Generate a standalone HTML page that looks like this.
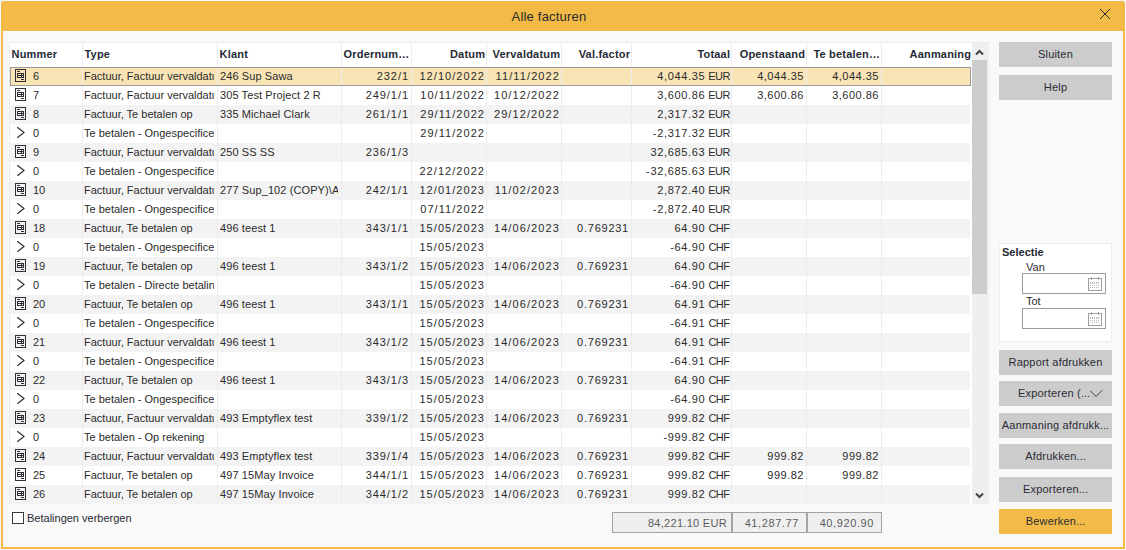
<!DOCTYPE html>
<html><head><meta charset="utf-8"><style>
*{box-sizing:border-box;margin:0;padding:0}
html,body{width:1126px;height:550px;overflow:hidden;background:#f4f6f9;font-family:"Liberation Sans",sans-serif;color:#2b2b2b}
.win{position:absolute;left:1px;top:1px;width:1124px;height:548px;background:#f9f9f9;border:2px solid #f2bb48;border-top:0;border-radius:3px 3px 0 0}
.title{position:absolute;left:-2px;top:0;width:1124px;height:30px;background:#f2bb48;border-radius:3px 3px 0 0}
.title .t{position:absolute;left:0;width:1096px;top:0;height:30px;line-height:31px;text-align:center;font-size:13px;color:#2a2a2a;letter-spacing:0.2px}
.a{position:absolute}
.tbl{position:absolute;left:9px;top:42px;width:980px;height:462px;background:#fff;border:1px solid #ebebeb;border-bottom:0;border-right:0;overflow:hidden}
.hdr{position:absolute;left:0;top:0;width:979px;height:24px;background:#fff}
.hdr .c{line-height:23px;height:24px;font-weight:bold;font-size:11px;color:#262a36}
.hdr .c{letter-spacing:.2px} .hdr .L{padding-left:1.5px} .hdr .R{padding-right:.8px}
.row{position:absolute;left:0;width:961px;height:19px}
.row.g{background:#f3f3f3;width:960px}
.row.sel{background:#f9e4b6}
.selb{position:absolute;left:0;top:24px;width:961px;height:19px;border:1px solid #9a9a9a}
.c{position:absolute;top:0;height:19px;line-height:19px;font-size:11px;white-space:nowrap;overflow:hidden}
.L{text-align:left;padding-left:2px}
.R{text-align:right;padding-right:2px}
.ic{position:absolute;left:5px;top:2px}
.sep{position:absolute;top:0;width:1px;height:462px;background:#ececec}
.sb{position:absolute;left:962px;top:0;width:17px;height:462px;background:#efefef}
.thumb{position:absolute;left:0;top:17px;width:15px;height:234px;background:#cdcdcd}
.btn{position:absolute;left:998px;width:113px;height:25px;background:#cccccc;font-size:11px;letter-spacing:.2px;line-height:25px;text-align:center;color:#2b2b35}
.btn i{font-style:normal;letter-spacing:0}
.btn.o{background:#f2bb48}
.tot{position:absolute;top:512px;height:21px;background:#efefef;border:1px solid #a3a3a3;font-size:11px;line-height:20px;text-align:right;padding-right:7px;color:#5c5c5c;letter-spacing:.6px}
</style></head><body>
<div class="win">
<div class="title"><div class="t">Alle facturen</div>
<svg class="a" style="left:1098px;top:7px" width="12" height="12" viewBox="0 0 12 12"><path d="M1 1 L11 11 M11 1 L1 11" stroke="#2a2a30" stroke-width="1"/></svg>
</div>

</div>
<div class="tbl">
<div class="hdr">
<div class="c L " style="left:0px;width:72px">Nummer</div>
<div class="c L " style="left:73px;width:134px">Type</div>
<div class="c L " style="left:208px;width:123px">Klant</div>
<div class="c L " style="left:332px;width:69px">Ordernum…</div>
<div class="c R " style="left:402px;width:74px">Datum</div>
<div class="c R " style="left:477px;width:74px">Vervaldatum</div>
<div class="c R " style="left:552px;width:69px">Val.factor</div>
<div class="c R " style="left:622px;width:99px">Totaal</div>
<div class="c R " style="left:722px;width:74px">Openstaand</div>
<div class="c R " style="left:797px;width:74px">Te betalen…</div>
<div class="c R " style="left:872px;width:90px">Aanmaning</div>
</div>
<div class="row sel" style="top:24px">
<svg class="ic" width="11" height="13" viewBox="0 0 11 13"><g fill="#2f2f35"><rect x="0" y="0" width="11" height="1"/><rect x="0" y="12" width="11" height="1"/><rect x="0" y="0" width="1" height="13"/><rect x="10" y="0" width="1" height="13"/><rect x="2" y="2" width="3" height="1"/><rect x="2" y="4" width="7" height="1"/><rect x="2" y="6" width="7" height="1"/><rect x="2" y="8" width="7" height="1"/><rect x="2" y="4" width="1" height="5"/><rect x="6" y="4" width="1" height="5"/><rect x="8" y="4" width="1" height="5"/><rect x="6" y="10" width="3" height="1"/></g></svg>
<div class="c L" style="left:21px;width:50px">6</div>
<div class="c L " style="left:73px;width:131px;padding-left:1px">Factuur, Factuur vervaldatum</div>
<div class="c L " style="left:208px;width:120px;letter-spacing:0.1px">246 Sup Sawa</div>
<div class="c R " style="left:332px;width:69px;letter-spacing:0.95px">232/1</div>
<div class="c R " style="left:402px;width:74px;letter-spacing:1.05px;padding-right:1px">12/10/2022</div>
<div class="c R " style="left:477px;width:74px;letter-spacing:1.1px;padding-right:1px">11/11/2022</div>
<div class="c R " style="left:552px;width:69px;letter-spacing:0.75px"></div>
<div class="c R " style="left:622px;width:99px;padding-right:1px"><span style="letter-spacing:.65px">4,044.35</span> <span style="letter-spacing:-.5px">EUR</span></div>
<div class="c R " style="left:722px;width:74px;letter-spacing:0.5px">4,044.35</div>
<div class="c R " style="left:797px;width:74px;letter-spacing:0.5px">4,044.35</div>
</div>
<div class="row " style="top:43px">
<svg class="ic" width="11" height="13" viewBox="0 0 11 13"><g fill="#2f2f35"><rect x="0" y="0" width="11" height="1"/><rect x="0" y="12" width="11" height="1"/><rect x="0" y="0" width="1" height="13"/><rect x="10" y="0" width="1" height="13"/><rect x="2" y="2" width="3" height="1"/><rect x="2" y="4" width="7" height="1"/><rect x="2" y="6" width="7" height="1"/><rect x="2" y="8" width="7" height="1"/><rect x="2" y="4" width="1" height="5"/><rect x="6" y="4" width="1" height="5"/><rect x="8" y="4" width="1" height="5"/><rect x="6" y="10" width="3" height="1"/></g></svg>
<div class="c L" style="left:21px;width:50px">7</div>
<div class="c L " style="left:73px;width:131px;padding-left:1px">Factuur, Factuur vervaldatum</div>
<div class="c L " style="left:208px;width:120px;letter-spacing:0.1px">305 Test Project 2 R</div>
<div class="c R " style="left:332px;width:69px;letter-spacing:0.95px">249/1/1</div>
<div class="c R " style="left:402px;width:74px;letter-spacing:1.05px;padding-right:1px">10/11/2022</div>
<div class="c R " style="left:477px;width:74px;letter-spacing:1.1px;padding-right:1px">10/12/2022</div>
<div class="c R " style="left:552px;width:69px;letter-spacing:0.75px"></div>
<div class="c R " style="left:622px;width:99px;padding-right:1px"><span style="letter-spacing:.65px">3,600.86</span> <span style="letter-spacing:-.5px">EUR</span></div>
<div class="c R " style="left:722px;width:74px;letter-spacing:0.5px">3,600.86</div>
<div class="c R " style="left:797px;width:74px;letter-spacing:0.5px">3,600.86</div>
</div>
<div class="row g" style="top:62px">
<svg class="ic" width="11" height="13" viewBox="0 0 11 13"><g fill="#2f2f35"><rect x="0" y="0" width="11" height="1"/><rect x="0" y="12" width="11" height="1"/><rect x="0" y="0" width="1" height="13"/><rect x="10" y="0" width="1" height="13"/><rect x="2" y="2" width="3" height="1"/><rect x="2" y="4" width="7" height="1"/><rect x="2" y="6" width="7" height="1"/><rect x="2" y="8" width="7" height="1"/><rect x="2" y="4" width="1" height="5"/><rect x="6" y="4" width="1" height="5"/><rect x="8" y="4" width="1" height="5"/><rect x="6" y="10" width="3" height="1"/></g></svg>
<div class="c L" style="left:21px;width:50px">8</div>
<div class="c L " style="left:73px;width:131px;padding-left:1px">Factuur, Te betalen op</div>
<div class="c L " style="left:208px;width:120px;letter-spacing:0.1px">335 Michael Clark</div>
<div class="c R " style="left:332px;width:69px;letter-spacing:0.95px">261/1/1</div>
<div class="c R " style="left:402px;width:74px;letter-spacing:1.05px;padding-right:1px">29/11/2022</div>
<div class="c R " style="left:477px;width:74px;letter-spacing:1.1px;padding-right:1px">29/12/2022</div>
<div class="c R " style="left:552px;width:69px;letter-spacing:0.75px"></div>
<div class="c R " style="left:622px;width:99px;padding-right:1px"><span style="letter-spacing:.65px">2,317.32</span> <span style="letter-spacing:-.5px">EUR</span></div>
<div class="c R " style="left:722px;width:74px;letter-spacing:0.5px"></div>
<div class="c R " style="left:797px;width:74px;letter-spacing:0.5px"></div>
</div>
<div class="row " style="top:81px">
<svg class="ic" width="11" height="13" viewBox="0 0 11 13" style="top:3px;left:5px"><path d="M2.3 0.2 L9 5.5 L2.3 10.8" fill="none" stroke="#2f2f35" stroke-width="1.2"/></svg>
<div class="c L" style="left:21px;width:50px">0</div>
<div class="c L " style="left:73px;width:131px;padding-left:1px">Te betalen - Ongespecificeerd</div>
<div class="c L " style="left:208px;width:120px;letter-spacing:0.1px"></div>
<div class="c R " style="left:332px;width:69px;letter-spacing:0.95px"></div>
<div class="c R " style="left:402px;width:74px;letter-spacing:1.05px;padding-right:1px">29/11/2022</div>
<div class="c R " style="left:477px;width:74px;letter-spacing:1.1px;padding-right:1px"></div>
<div class="c R " style="left:552px;width:69px;letter-spacing:0.75px"></div>
<div class="c R " style="left:622px;width:99px;padding-right:1px"><span style="letter-spacing:.65px">-2,317.32</span> <span style="letter-spacing:-.5px">EUR</span></div>
<div class="c R " style="left:722px;width:74px;letter-spacing:0.5px"></div>
<div class="c R " style="left:797px;width:74px;letter-spacing:0.5px"></div>
</div>
<div class="row g" style="top:100px">
<svg class="ic" width="11" height="13" viewBox="0 0 11 13"><g fill="#2f2f35"><rect x="0" y="0" width="11" height="1"/><rect x="0" y="12" width="11" height="1"/><rect x="0" y="0" width="1" height="13"/><rect x="10" y="0" width="1" height="13"/><rect x="2" y="2" width="3" height="1"/><rect x="2" y="4" width="7" height="1"/><rect x="2" y="6" width="7" height="1"/><rect x="2" y="8" width="7" height="1"/><rect x="2" y="4" width="1" height="5"/><rect x="6" y="4" width="1" height="5"/><rect x="8" y="4" width="1" height="5"/><rect x="6" y="10" width="3" height="1"/></g></svg>
<div class="c L" style="left:21px;width:50px">9</div>
<div class="c L " style="left:73px;width:131px;padding-left:1px">Factuur, Factuur vervaldatum</div>
<div class="c L " style="left:208px;width:120px;letter-spacing:0.1px">250 SS SS</div>
<div class="c R " style="left:332px;width:69px;letter-spacing:0.95px">236/1/3</div>
<div class="c R " style="left:402px;width:74px;letter-spacing:1.05px;padding-right:1px"></div>
<div class="c R " style="left:477px;width:74px;letter-spacing:1.1px;padding-right:1px"></div>
<div class="c R " style="left:552px;width:69px;letter-spacing:0.75px"></div>
<div class="c R " style="left:622px;width:99px;padding-right:1px"><span style="letter-spacing:.65px">32,685.63</span> <span style="letter-spacing:-.5px">EUR</span></div>
<div class="c R " style="left:722px;width:74px;letter-spacing:0.5px"></div>
<div class="c R " style="left:797px;width:74px;letter-spacing:0.5px"></div>
</div>
<div class="row " style="top:119px">
<svg class="ic" width="11" height="13" viewBox="0 0 11 13" style="top:3px;left:5px"><path d="M2.3 0.2 L9 5.5 L2.3 10.8" fill="none" stroke="#2f2f35" stroke-width="1.2"/></svg>
<div class="c L" style="left:21px;width:50px">0</div>
<div class="c L " style="left:73px;width:131px;padding-left:1px">Te betalen - Ongespecificeerd</div>
<div class="c L " style="left:208px;width:120px;letter-spacing:0.1px"></div>
<div class="c R " style="left:332px;width:69px;letter-spacing:0.95px"></div>
<div class="c R " style="left:402px;width:74px;letter-spacing:1.05px;padding-right:1px">22/12/2022</div>
<div class="c R " style="left:477px;width:74px;letter-spacing:1.1px;padding-right:1px"></div>
<div class="c R " style="left:552px;width:69px;letter-spacing:0.75px"></div>
<div class="c R " style="left:622px;width:99px;padding-right:1px"><span style="letter-spacing:.65px">-32,685.63</span> <span style="letter-spacing:-.5px">EUR</span></div>
<div class="c R " style="left:722px;width:74px;letter-spacing:0.5px"></div>
<div class="c R " style="left:797px;width:74px;letter-spacing:0.5px"></div>
</div>
<div class="row g" style="top:138px">
<svg class="ic" width="11" height="13" viewBox="0 0 11 13"><g fill="#2f2f35"><rect x="0" y="0" width="11" height="1"/><rect x="0" y="12" width="11" height="1"/><rect x="0" y="0" width="1" height="13"/><rect x="10" y="0" width="1" height="13"/><rect x="2" y="2" width="3" height="1"/><rect x="2" y="4" width="7" height="1"/><rect x="2" y="6" width="7" height="1"/><rect x="2" y="8" width="7" height="1"/><rect x="2" y="4" width="1" height="5"/><rect x="6" y="4" width="1" height="5"/><rect x="8" y="4" width="1" height="5"/><rect x="6" y="10" width="3" height="1"/></g></svg>
<div class="c L" style="left:21px;width:50px">10</div>
<div class="c L " style="left:73px;width:131px;padding-left:1px">Factuur, Factuur vervaldatum</div>
<div class="c L " style="left:208px;width:120px;letter-spacing:0.1px">277 Sup_102 (COPY)\Adres</div>
<div class="c R " style="left:332px;width:69px;letter-spacing:0.95px">242/1/1</div>
<div class="c R " style="left:402px;width:74px;letter-spacing:1.05px;padding-right:1px">12/01/2023</div>
<div class="c R " style="left:477px;width:74px;letter-spacing:1.1px;padding-right:1px">11/02/2023</div>
<div class="c R " style="left:552px;width:69px;letter-spacing:0.75px"></div>
<div class="c R " style="left:622px;width:99px;padding-right:1px"><span style="letter-spacing:.65px">2,872.40</span> <span style="letter-spacing:-.5px">EUR</span></div>
<div class="c R " style="left:722px;width:74px;letter-spacing:0.5px"></div>
<div class="c R " style="left:797px;width:74px;letter-spacing:0.5px"></div>
</div>
<div class="row " style="top:157px">
<svg class="ic" width="11" height="13" viewBox="0 0 11 13" style="top:3px;left:5px"><path d="M2.3 0.2 L9 5.5 L2.3 10.8" fill="none" stroke="#2f2f35" stroke-width="1.2"/></svg>
<div class="c L" style="left:21px;width:50px">0</div>
<div class="c L " style="left:73px;width:131px;padding-left:1px">Te betalen - Ongespecificeerd</div>
<div class="c L " style="left:208px;width:120px;letter-spacing:0.1px"></div>
<div class="c R " style="left:332px;width:69px;letter-spacing:0.95px"></div>
<div class="c R " style="left:402px;width:74px;letter-spacing:1.05px;padding-right:1px">07/11/2022</div>
<div class="c R " style="left:477px;width:74px;letter-spacing:1.1px;padding-right:1px"></div>
<div class="c R " style="left:552px;width:69px;letter-spacing:0.75px"></div>
<div class="c R " style="left:622px;width:99px;padding-right:1px"><span style="letter-spacing:.65px">-2,872.40</span> <span style="letter-spacing:-.5px">EUR</span></div>
<div class="c R " style="left:722px;width:74px;letter-spacing:0.5px"></div>
<div class="c R " style="left:797px;width:74px;letter-spacing:0.5px"></div>
</div>
<div class="row g" style="top:176px">
<svg class="ic" width="11" height="13" viewBox="0 0 11 13"><g fill="#2f2f35"><rect x="0" y="0" width="11" height="1"/><rect x="0" y="12" width="11" height="1"/><rect x="0" y="0" width="1" height="13"/><rect x="10" y="0" width="1" height="13"/><rect x="2" y="2" width="3" height="1"/><rect x="2" y="4" width="7" height="1"/><rect x="2" y="6" width="7" height="1"/><rect x="2" y="8" width="7" height="1"/><rect x="2" y="4" width="1" height="5"/><rect x="6" y="4" width="1" height="5"/><rect x="8" y="4" width="1" height="5"/><rect x="6" y="10" width="3" height="1"/></g></svg>
<div class="c L" style="left:21px;width:50px">18</div>
<div class="c L " style="left:73px;width:131px;padding-left:1px">Factuur, Te betalen op</div>
<div class="c L " style="left:208px;width:120px;letter-spacing:0.1px">496 teest 1</div>
<div class="c R " style="left:332px;width:69px;letter-spacing:0.95px">343/1/1</div>
<div class="c R " style="left:402px;width:74px;letter-spacing:1.05px;padding-right:1px">15/05/2023</div>
<div class="c R " style="left:477px;width:74px;letter-spacing:1.1px;padding-right:1px">14/06/2023</div>
<div class="c R " style="left:552px;width:69px;letter-spacing:0.75px">0.769231</div>
<div class="c R " style="left:622px;width:99px;padding-right:1.5px"><span style="letter-spacing:.65px">64.90</span> <span style="letter-spacing:-.5px">CHF</span></div>
<div class="c R " style="left:722px;width:74px;letter-spacing:0.5px"></div>
<div class="c R " style="left:797px;width:74px;letter-spacing:0.5px"></div>
</div>
<div class="row " style="top:195px">
<svg class="ic" width="11" height="13" viewBox="0 0 11 13" style="top:3px;left:5px"><path d="M2.3 0.2 L9 5.5 L2.3 10.8" fill="none" stroke="#2f2f35" stroke-width="1.2"/></svg>
<div class="c L" style="left:21px;width:50px">0</div>
<div class="c L " style="left:73px;width:131px;padding-left:1px">Te betalen - Ongespecificeerd</div>
<div class="c L " style="left:208px;width:120px;letter-spacing:0.1px"></div>
<div class="c R " style="left:332px;width:69px;letter-spacing:0.95px"></div>
<div class="c R " style="left:402px;width:74px;letter-spacing:1.05px;padding-right:1px">15/05/2023</div>
<div class="c R " style="left:477px;width:74px;letter-spacing:1.1px;padding-right:1px"></div>
<div class="c R " style="left:552px;width:69px;letter-spacing:0.75px"></div>
<div class="c R " style="left:622px;width:99px;padding-right:1.5px"><span style="letter-spacing:.65px">-64.90</span> <span style="letter-spacing:-.5px">CHF</span></div>
<div class="c R " style="left:722px;width:74px;letter-spacing:0.5px"></div>
<div class="c R " style="left:797px;width:74px;letter-spacing:0.5px"></div>
</div>
<div class="row g" style="top:214px">
<svg class="ic" width="11" height="13" viewBox="0 0 11 13"><g fill="#2f2f35"><rect x="0" y="0" width="11" height="1"/><rect x="0" y="12" width="11" height="1"/><rect x="0" y="0" width="1" height="13"/><rect x="10" y="0" width="1" height="13"/><rect x="2" y="2" width="3" height="1"/><rect x="2" y="4" width="7" height="1"/><rect x="2" y="6" width="7" height="1"/><rect x="2" y="8" width="7" height="1"/><rect x="2" y="4" width="1" height="5"/><rect x="6" y="4" width="1" height="5"/><rect x="8" y="4" width="1" height="5"/><rect x="6" y="10" width="3" height="1"/></g></svg>
<div class="c L" style="left:21px;width:50px">19</div>
<div class="c L " style="left:73px;width:131px;padding-left:1px">Factuur, Te betalen op</div>
<div class="c L " style="left:208px;width:120px;letter-spacing:0.1px">496 teest 1</div>
<div class="c R " style="left:332px;width:69px;letter-spacing:0.95px">343/1/2</div>
<div class="c R " style="left:402px;width:74px;letter-spacing:1.05px;padding-right:1px">15/05/2023</div>
<div class="c R " style="left:477px;width:74px;letter-spacing:1.1px;padding-right:1px">14/06/2023</div>
<div class="c R " style="left:552px;width:69px;letter-spacing:0.75px">0.769231</div>
<div class="c R " style="left:622px;width:99px;padding-right:1.5px"><span style="letter-spacing:.65px">64.90</span> <span style="letter-spacing:-.5px">CHF</span></div>
<div class="c R " style="left:722px;width:74px;letter-spacing:0.5px"></div>
<div class="c R " style="left:797px;width:74px;letter-spacing:0.5px"></div>
</div>
<div class="row " style="top:233px">
<svg class="ic" width="11" height="13" viewBox="0 0 11 13" style="top:3px;left:5px"><path d="M2.3 0.2 L9 5.5 L2.3 10.8" fill="none" stroke="#2f2f35" stroke-width="1.2"/></svg>
<div class="c L" style="left:21px;width:50px">0</div>
<div class="c L " style="left:73px;width:131px;padding-left:1px">Te betalen - Directe betaling</div>
<div class="c L " style="left:208px;width:120px;letter-spacing:0.1px"></div>
<div class="c R " style="left:332px;width:69px;letter-spacing:0.95px"></div>
<div class="c R " style="left:402px;width:74px;letter-spacing:1.05px;padding-right:1px">15/05/2023</div>
<div class="c R " style="left:477px;width:74px;letter-spacing:1.1px;padding-right:1px"></div>
<div class="c R " style="left:552px;width:69px;letter-spacing:0.75px"></div>
<div class="c R " style="left:622px;width:99px;padding-right:1.5px"><span style="letter-spacing:.65px">-64.90</span> <span style="letter-spacing:-.5px">CHF</span></div>
<div class="c R " style="left:722px;width:74px;letter-spacing:0.5px"></div>
<div class="c R " style="left:797px;width:74px;letter-spacing:0.5px"></div>
</div>
<div class="row g" style="top:252px">
<svg class="ic" width="11" height="13" viewBox="0 0 11 13"><g fill="#2f2f35"><rect x="0" y="0" width="11" height="1"/><rect x="0" y="12" width="11" height="1"/><rect x="0" y="0" width="1" height="13"/><rect x="10" y="0" width="1" height="13"/><rect x="2" y="2" width="3" height="1"/><rect x="2" y="4" width="7" height="1"/><rect x="2" y="6" width="7" height="1"/><rect x="2" y="8" width="7" height="1"/><rect x="2" y="4" width="1" height="5"/><rect x="6" y="4" width="1" height="5"/><rect x="8" y="4" width="1" height="5"/><rect x="6" y="10" width="3" height="1"/></g></svg>
<div class="c L" style="left:21px;width:50px">20</div>
<div class="c L " style="left:73px;width:131px;padding-left:1px">Factuur, Te betalen op</div>
<div class="c L " style="left:208px;width:120px;letter-spacing:0.1px">496 teest 1</div>
<div class="c R " style="left:332px;width:69px;letter-spacing:0.95px">343/1/1</div>
<div class="c R " style="left:402px;width:74px;letter-spacing:1.05px;padding-right:1px">15/05/2023</div>
<div class="c R " style="left:477px;width:74px;letter-spacing:1.1px;padding-right:1px">14/06/2023</div>
<div class="c R " style="left:552px;width:69px;letter-spacing:0.75px">0.769231</div>
<div class="c R " style="left:622px;width:99px;padding-right:1.5px"><span style="letter-spacing:.65px">64.91</span> <span style="letter-spacing:-.5px">CHF</span></div>
<div class="c R " style="left:722px;width:74px;letter-spacing:0.5px"></div>
<div class="c R " style="left:797px;width:74px;letter-spacing:0.5px"></div>
</div>
<div class="row " style="top:271px">
<svg class="ic" width="11" height="13" viewBox="0 0 11 13" style="top:3px;left:5px"><path d="M2.3 0.2 L9 5.5 L2.3 10.8" fill="none" stroke="#2f2f35" stroke-width="1.2"/></svg>
<div class="c L" style="left:21px;width:50px">0</div>
<div class="c L " style="left:73px;width:131px;padding-left:1px">Te betalen - Ongespecificeerd</div>
<div class="c L " style="left:208px;width:120px;letter-spacing:0.1px"></div>
<div class="c R " style="left:332px;width:69px;letter-spacing:0.95px"></div>
<div class="c R " style="left:402px;width:74px;letter-spacing:1.05px;padding-right:1px">15/05/2023</div>
<div class="c R " style="left:477px;width:74px;letter-spacing:1.1px;padding-right:1px"></div>
<div class="c R " style="left:552px;width:69px;letter-spacing:0.75px"></div>
<div class="c R " style="left:622px;width:99px;padding-right:1.5px"><span style="letter-spacing:.65px">-64.91</span> <span style="letter-spacing:-.5px">CHF</span></div>
<div class="c R " style="left:722px;width:74px;letter-spacing:0.5px"></div>
<div class="c R " style="left:797px;width:74px;letter-spacing:0.5px"></div>
</div>
<div class="row g" style="top:290px">
<svg class="ic" width="11" height="13" viewBox="0 0 11 13"><g fill="#2f2f35"><rect x="0" y="0" width="11" height="1"/><rect x="0" y="12" width="11" height="1"/><rect x="0" y="0" width="1" height="13"/><rect x="10" y="0" width="1" height="13"/><rect x="2" y="2" width="3" height="1"/><rect x="2" y="4" width="7" height="1"/><rect x="2" y="6" width="7" height="1"/><rect x="2" y="8" width="7" height="1"/><rect x="2" y="4" width="1" height="5"/><rect x="6" y="4" width="1" height="5"/><rect x="8" y="4" width="1" height="5"/><rect x="6" y="10" width="3" height="1"/></g></svg>
<div class="c L" style="left:21px;width:50px">21</div>
<div class="c L " style="left:73px;width:131px;padding-left:1px">Factuur, Factuur vervaldatum</div>
<div class="c L " style="left:208px;width:120px;letter-spacing:0.1px">496 teest 1</div>
<div class="c R " style="left:332px;width:69px;letter-spacing:0.95px">343/1/2</div>
<div class="c R " style="left:402px;width:74px;letter-spacing:1.05px;padding-right:1px">15/05/2023</div>
<div class="c R " style="left:477px;width:74px;letter-spacing:1.1px;padding-right:1px">14/06/2023</div>
<div class="c R " style="left:552px;width:69px;letter-spacing:0.75px">0.769231</div>
<div class="c R " style="left:622px;width:99px;padding-right:1.5px"><span style="letter-spacing:.65px">64.91</span> <span style="letter-spacing:-.5px">CHF</span></div>
<div class="c R " style="left:722px;width:74px;letter-spacing:0.5px"></div>
<div class="c R " style="left:797px;width:74px;letter-spacing:0.5px"></div>
</div>
<div class="row " style="top:309px">
<svg class="ic" width="11" height="13" viewBox="0 0 11 13" style="top:3px;left:5px"><path d="M2.3 0.2 L9 5.5 L2.3 10.8" fill="none" stroke="#2f2f35" stroke-width="1.2"/></svg>
<div class="c L" style="left:21px;width:50px">0</div>
<div class="c L " style="left:73px;width:131px;padding-left:1px">Te betalen - Ongespecificeerd</div>
<div class="c L " style="left:208px;width:120px;letter-spacing:0.1px"></div>
<div class="c R " style="left:332px;width:69px;letter-spacing:0.95px"></div>
<div class="c R " style="left:402px;width:74px;letter-spacing:1.05px;padding-right:1px">15/05/2023</div>
<div class="c R " style="left:477px;width:74px;letter-spacing:1.1px;padding-right:1px"></div>
<div class="c R " style="left:552px;width:69px;letter-spacing:0.75px"></div>
<div class="c R " style="left:622px;width:99px;padding-right:1.5px"><span style="letter-spacing:.65px">-64.91</span> <span style="letter-spacing:-.5px">CHF</span></div>
<div class="c R " style="left:722px;width:74px;letter-spacing:0.5px"></div>
<div class="c R " style="left:797px;width:74px;letter-spacing:0.5px"></div>
</div>
<div class="row g" style="top:328px">
<svg class="ic" width="11" height="13" viewBox="0 0 11 13"><g fill="#2f2f35"><rect x="0" y="0" width="11" height="1"/><rect x="0" y="12" width="11" height="1"/><rect x="0" y="0" width="1" height="13"/><rect x="10" y="0" width="1" height="13"/><rect x="2" y="2" width="3" height="1"/><rect x="2" y="4" width="7" height="1"/><rect x="2" y="6" width="7" height="1"/><rect x="2" y="8" width="7" height="1"/><rect x="2" y="4" width="1" height="5"/><rect x="6" y="4" width="1" height="5"/><rect x="8" y="4" width="1" height="5"/><rect x="6" y="10" width="3" height="1"/></g></svg>
<div class="c L" style="left:21px;width:50px">22</div>
<div class="c L " style="left:73px;width:131px;padding-left:1px">Factuur, Te betalen op</div>
<div class="c L " style="left:208px;width:120px;letter-spacing:0.1px">496 teest 1</div>
<div class="c R " style="left:332px;width:69px;letter-spacing:0.95px">343/1/3</div>
<div class="c R " style="left:402px;width:74px;letter-spacing:1.05px;padding-right:1px">15/05/2023</div>
<div class="c R " style="left:477px;width:74px;letter-spacing:1.1px;padding-right:1px">14/06/2023</div>
<div class="c R " style="left:552px;width:69px;letter-spacing:0.75px">0.769231</div>
<div class="c R " style="left:622px;width:99px;padding-right:1.5px"><span style="letter-spacing:.65px">64.90</span> <span style="letter-spacing:-.5px">CHF</span></div>
<div class="c R " style="left:722px;width:74px;letter-spacing:0.5px"></div>
<div class="c R " style="left:797px;width:74px;letter-spacing:0.5px"></div>
</div>
<div class="row " style="top:347px">
<svg class="ic" width="11" height="13" viewBox="0 0 11 13" style="top:3px;left:5px"><path d="M2.3 0.2 L9 5.5 L2.3 10.8" fill="none" stroke="#2f2f35" stroke-width="1.2"/></svg>
<div class="c L" style="left:21px;width:50px">0</div>
<div class="c L " style="left:73px;width:131px;padding-left:1px">Te betalen - Ongespecificeerd</div>
<div class="c L " style="left:208px;width:120px;letter-spacing:0.1px"></div>
<div class="c R " style="left:332px;width:69px;letter-spacing:0.95px"></div>
<div class="c R " style="left:402px;width:74px;letter-spacing:1.05px;padding-right:1px">15/05/2023</div>
<div class="c R " style="left:477px;width:74px;letter-spacing:1.1px;padding-right:1px"></div>
<div class="c R " style="left:552px;width:69px;letter-spacing:0.75px"></div>
<div class="c R " style="left:622px;width:99px;padding-right:1.5px"><span style="letter-spacing:.65px">-64.90</span> <span style="letter-spacing:-.5px">CHF</span></div>
<div class="c R " style="left:722px;width:74px;letter-spacing:0.5px"></div>
<div class="c R " style="left:797px;width:74px;letter-spacing:0.5px"></div>
</div>
<div class="row g" style="top:366px">
<svg class="ic" width="11" height="13" viewBox="0 0 11 13"><g fill="#2f2f35"><rect x="0" y="0" width="11" height="1"/><rect x="0" y="12" width="11" height="1"/><rect x="0" y="0" width="1" height="13"/><rect x="10" y="0" width="1" height="13"/><rect x="2" y="2" width="3" height="1"/><rect x="2" y="4" width="7" height="1"/><rect x="2" y="6" width="7" height="1"/><rect x="2" y="8" width="7" height="1"/><rect x="2" y="4" width="1" height="5"/><rect x="6" y="4" width="1" height="5"/><rect x="8" y="4" width="1" height="5"/><rect x="6" y="10" width="3" height="1"/></g></svg>
<div class="c L" style="left:21px;width:50px">23</div>
<div class="c L " style="left:73px;width:131px;padding-left:1px">Factuur, Factuur vervaldatum</div>
<div class="c L " style="left:208px;width:120px;letter-spacing:0.1px">493 Emptyflex test</div>
<div class="c R " style="left:332px;width:69px;letter-spacing:0.95px">339/1/2</div>
<div class="c R " style="left:402px;width:74px;letter-spacing:1.05px;padding-right:1px">15/05/2023</div>
<div class="c R " style="left:477px;width:74px;letter-spacing:1.1px;padding-right:1px">14/06/2023</div>
<div class="c R " style="left:552px;width:69px;letter-spacing:0.75px">0.769231</div>
<div class="c R " style="left:622px;width:99px;padding-right:1.5px"><span style="letter-spacing:.65px">999.82</span> <span style="letter-spacing:-.5px">CHF</span></div>
<div class="c R " style="left:722px;width:74px;letter-spacing:0.5px"></div>
<div class="c R " style="left:797px;width:74px;letter-spacing:0.5px"></div>
</div>
<div class="row " style="top:385px">
<svg class="ic" width="11" height="13" viewBox="0 0 11 13" style="top:3px;left:5px"><path d="M2.3 0.2 L9 5.5 L2.3 10.8" fill="none" stroke="#2f2f35" stroke-width="1.2"/></svg>
<div class="c L" style="left:21px;width:50px">0</div>
<div class="c L " style="left:73px;width:131px;padding-left:1px">Te betalen - Op rekening</div>
<div class="c L " style="left:208px;width:120px;letter-spacing:0.1px"></div>
<div class="c R " style="left:332px;width:69px;letter-spacing:0.95px"></div>
<div class="c R " style="left:402px;width:74px;letter-spacing:1.05px;padding-right:1px">15/05/2023</div>
<div class="c R " style="left:477px;width:74px;letter-spacing:1.1px;padding-right:1px"></div>
<div class="c R " style="left:552px;width:69px;letter-spacing:0.75px"></div>
<div class="c R " style="left:622px;width:99px;padding-right:1.5px"><span style="letter-spacing:.65px">-999.82</span> <span style="letter-spacing:-.5px">CHF</span></div>
<div class="c R " style="left:722px;width:74px;letter-spacing:0.5px"></div>
<div class="c R " style="left:797px;width:74px;letter-spacing:0.5px"></div>
</div>
<div class="row g" style="top:404px">
<svg class="ic" width="11" height="13" viewBox="0 0 11 13"><g fill="#2f2f35"><rect x="0" y="0" width="11" height="1"/><rect x="0" y="12" width="11" height="1"/><rect x="0" y="0" width="1" height="13"/><rect x="10" y="0" width="1" height="13"/><rect x="2" y="2" width="3" height="1"/><rect x="2" y="4" width="7" height="1"/><rect x="2" y="6" width="7" height="1"/><rect x="2" y="8" width="7" height="1"/><rect x="2" y="4" width="1" height="5"/><rect x="6" y="4" width="1" height="5"/><rect x="8" y="4" width="1" height="5"/><rect x="6" y="10" width="3" height="1"/></g></svg>
<div class="c L" style="left:21px;width:50px">24</div>
<div class="c L " style="left:73px;width:131px;padding-left:1px">Factuur, Factuur vervaldatum</div>
<div class="c L " style="left:208px;width:120px;letter-spacing:0.1px">493 Emptyflex test</div>
<div class="c R " style="left:332px;width:69px;letter-spacing:0.95px">339/1/4</div>
<div class="c R " style="left:402px;width:74px;letter-spacing:1.05px;padding-right:1px">15/05/2023</div>
<div class="c R " style="left:477px;width:74px;letter-spacing:1.1px;padding-right:1px">14/06/2023</div>
<div class="c R " style="left:552px;width:69px;letter-spacing:0.75px">0.769231</div>
<div class="c R " style="left:622px;width:99px;padding-right:1.5px"><span style="letter-spacing:.65px">999.82</span> <span style="letter-spacing:-.5px">CHF</span></div>
<div class="c R " style="left:722px;width:74px;letter-spacing:0.5px">999.82</div>
<div class="c R " style="left:797px;width:74px;letter-spacing:0.5px">999.82</div>
</div>
<div class="row " style="top:423px">
<svg class="ic" width="11" height="13" viewBox="0 0 11 13"><g fill="#2f2f35"><rect x="0" y="0" width="11" height="1"/><rect x="0" y="12" width="11" height="1"/><rect x="0" y="0" width="1" height="13"/><rect x="10" y="0" width="1" height="13"/><rect x="2" y="2" width="3" height="1"/><rect x="2" y="4" width="7" height="1"/><rect x="2" y="6" width="7" height="1"/><rect x="2" y="8" width="7" height="1"/><rect x="2" y="4" width="1" height="5"/><rect x="6" y="4" width="1" height="5"/><rect x="8" y="4" width="1" height="5"/><rect x="6" y="10" width="3" height="1"/></g></svg>
<div class="c L" style="left:21px;width:50px">25</div>
<div class="c L " style="left:73px;width:131px;padding-left:1px">Factuur, Te betalen op</div>
<div class="c L " style="left:208px;width:120px;letter-spacing:0.1px">497 15May Invoice</div>
<div class="c R " style="left:332px;width:69px;letter-spacing:0.95px">344/1/1</div>
<div class="c R " style="left:402px;width:74px;letter-spacing:1.05px;padding-right:1px">15/05/2023</div>
<div class="c R " style="left:477px;width:74px;letter-spacing:1.1px;padding-right:1px">14/06/2023</div>
<div class="c R " style="left:552px;width:69px;letter-spacing:0.75px">0.769231</div>
<div class="c R " style="left:622px;width:99px;padding-right:1.5px"><span style="letter-spacing:.65px">999.82</span> <span style="letter-spacing:-.5px">CHF</span></div>
<div class="c R " style="left:722px;width:74px;letter-spacing:0.5px">999.82</div>
<div class="c R " style="left:797px;width:74px;letter-spacing:0.5px">999.82</div>
</div>
<div class="row g" style="top:442px">
<svg class="ic" width="11" height="13" viewBox="0 0 11 13"><g fill="#2f2f35"><rect x="0" y="0" width="11" height="1"/><rect x="0" y="12" width="11" height="1"/><rect x="0" y="0" width="1" height="13"/><rect x="10" y="0" width="1" height="13"/><rect x="2" y="2" width="3" height="1"/><rect x="2" y="4" width="7" height="1"/><rect x="2" y="6" width="7" height="1"/><rect x="2" y="8" width="7" height="1"/><rect x="2" y="4" width="1" height="5"/><rect x="6" y="4" width="1" height="5"/><rect x="8" y="4" width="1" height="5"/><rect x="6" y="10" width="3" height="1"/></g></svg>
<div class="c L" style="left:21px;width:50px">26</div>
<div class="c L " style="left:73px;width:131px;padding-left:1px">Factuur, Te betalen op</div>
<div class="c L " style="left:208px;width:120px;letter-spacing:0.1px">497 15May Invoice</div>
<div class="c R " style="left:332px;width:69px;letter-spacing:0.95px">344/1/2</div>
<div class="c R " style="left:402px;width:74px;letter-spacing:1.05px;padding-right:1px">15/05/2023</div>
<div class="c R " style="left:477px;width:74px;letter-spacing:1.1px;padding-right:1px">14/06/2023</div>
<div class="c R " style="left:552px;width:69px;letter-spacing:0.75px">0.769231</div>
<div class="c R " style="left:622px;width:99px;padding-right:1.5px"><span style="letter-spacing:.65px">999.82</span> <span style="letter-spacing:-.5px">CHF</span></div>
<div class="c R " style="left:722px;width:74px;letter-spacing:0.5px"></div>
<div class="c R " style="left:797px;width:74px;letter-spacing:0.5px"></div>
</div>
<div class="sep" style="left:72px"></div>
<div class="sep" style="left:207px"></div>
<div class="sep" style="left:331px"></div>
<div class="sep" style="left:401px"></div>
<div class="sep" style="left:476px"></div>
<div class="sep" style="left:551px"></div>
<div class="sep" style="left:621px"></div>
<div class="sep" style="left:721px"></div>
<div class="sep" style="left:796px"></div>
<div class="sep" style="left:871px"></div>
<div class="selb"></div>
<div class="sb"><div class="thumb"></div><svg class="a" style="left:3px;top:5.5px" width="9" height="7" viewBox="0 0 9 7"><path d="M1 5.5 L4.5 2 L8 5.5" fill="none" stroke="#444" stroke-width="2"/></svg><svg class="a" style="left:3px;top:449px" width="9" height="7" viewBox="0 0 9 7"><path d="M1 1.5 L4.5 5 L8 1.5" fill="none" stroke="#444" stroke-width="2"/></svg></div>
</div>
<div class="a" style="left:12px;top:512px;width:12px;height:12px;border:1px solid #3a3a44;background:#fff"></div>
<div class="a" style="left:27px;top:511px;font-size:11px;line-height:14px;color:#2b2b35">Betalingen verbergen</div>
<div class="tot" style="left:612px;width:120px;padding-right:4px;letter-spacing:.3px">84,221.10 EUR</div>
<div class="tot" style="left:732px;width:75px">41,287.77</div>
<div class="tot" style="left:807px;width:75px">40,920.90</div>
<div class="btn" style="top:42px;left:999px">Sluiten</div>
<div class="btn" style="top:75px;left:999px">Help</div>
<div class="btn" style="top:350px;left:999px">Rapport afdrukken</div>
<div class="btn" style="top:381px;left:999px"><span style="position:absolute;left:19px">Exporteren (<i>...</i></span><svg class="a" style="left:91px;top:9px" width="13" height="8" viewBox="0 0 13 8"><path d="M0 0.5 L6 6.5 L12 0.5" fill="none" stroke="#2b2b35" stroke-width="0.9"/></svg></div>
<div class="btn" style="top:413px;left:999px">Aanmaning afdrukk<i>...</i></div>
<div class="btn" style="top:444px;left:999px">Afdrukken<i>...</i></div>
<div class="btn" style="top:477px;left:999px">Exporteren<i>...</i></div>
<div class="btn o" style="top:509px;left:999px">Bewerken<i>...</i></div>
<div class="a" style="left:999px;top:243px;width:113px;height:99px;background:#fff;border:1px solid #eeeeee"></div>
<div class="a" style="left:1002px;top:245px;font-size:11px;font-weight:bold;line-height:14px;color:#262a36">Selectie</div>
<div class="a" style="left:1026px;top:260px;font-size:11px;line-height:14px;color:#2b2b35">Van</div>
<div class="a" style="left:1026px;top:294px;font-size:11px;line-height:14px;color:#2b2b35">Tot</div>
<div class="a" style="left:1022px;top:273px;width:84px;height:21px;background:#fff;border:1px solid #9c9c9c"><svg class="a" style="left:65px;top:3px" width="14" height="14" viewBox="0 0 14 14"><g fill="#9d9da3"><rect x="0" y="1" width="14" height="1"/><rect x="0" y="13" width="14" height="1"/><rect x="0" y="1" width="1" height="13"/><rect x="13" y="1" width="1" height="13"/><rect x="3" y="0" width="1" height="3"/><rect x="10" y="0" width="1" height="3"/></g><g fill="#b9b9c0"><rect x="2" y="5" width="1" height="2"/><rect x="4" y="5" width="1" height="2"/><rect x="6" y="5" width="1" height="2"/><rect x="8" y="5" width="1" height="2"/><rect x="10" y="5" width="1" height="2"/><rect x="2" y="8" width="1" height="1"/><rect x="4" y="8" width="1" height="1"/><rect x="6" y="8" width="1" height="1"/><rect x="8" y="8" width="1" height="1"/><rect x="10" y="8" width="1" height="1"/><rect x="2" y="10" width="1" height="1"/><rect x="4" y="10" width="1" height="1"/><rect x="6" y="10" width="1" height="1"/><rect x="8" y="10" width="1" height="1"/><rect x="10" y="10" width="1" height="1"/></g></svg></div>
<div class="a" style="left:1022px;top:308px;width:84px;height:21px;background:#fff;border:1px solid #9c9c9c"><svg class="a" style="left:65px;top:3px" width="14" height="14" viewBox="0 0 14 14"><g fill="#9d9da3"><rect x="0" y="1" width="14" height="1"/><rect x="0" y="13" width="14" height="1"/><rect x="0" y="1" width="1" height="13"/><rect x="13" y="1" width="1" height="13"/><rect x="3" y="0" width="1" height="3"/><rect x="10" y="0" width="1" height="3"/></g><g fill="#b9b9c0"><rect x="2" y="5" width="1" height="2"/><rect x="4" y="5" width="1" height="2"/><rect x="6" y="5" width="1" height="2"/><rect x="8" y="5" width="1" height="2"/><rect x="10" y="5" width="1" height="2"/><rect x="2" y="8" width="1" height="1"/><rect x="4" y="8" width="1" height="1"/><rect x="6" y="8" width="1" height="1"/><rect x="8" y="8" width="1" height="1"/><rect x="10" y="8" width="1" height="1"/><rect x="2" y="10" width="1" height="1"/><rect x="4" y="10" width="1" height="1"/><rect x="6" y="10" width="1" height="1"/><rect x="8" y="10" width="1" height="1"/><rect x="10" y="10" width="1" height="1"/></g></svg></div>
</body></html>
